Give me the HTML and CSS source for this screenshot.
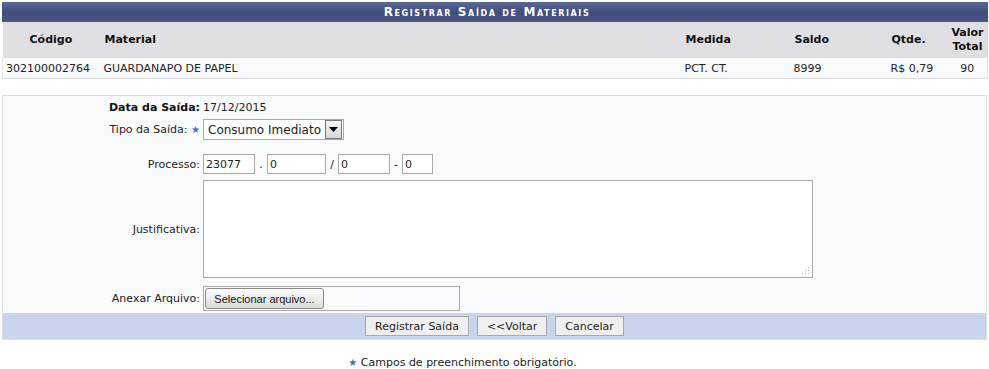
FILE: index.html
```html
<!DOCTYPE html>
<html>
<head>
    <meta charset="UTF-8">
    <title>Registrar Saída de Materiais</title>
    <link rel="stylesheet" href="styles.css">
</head>
<body>
    <table class="listing">
        <caption>Registrar Saída de Materiais</caption>
        <colgroup>
            <col class="w-cod"><col class="w-mat"><col class="w-med"><col class="w-sal"><col class="w-qtd"><col class="w-val">
        </colgroup>
        <thead>
            <tr>
                <th class="th-cod">Código</th>
                <th>Material</th>
                <th>Medida</th>
                <th>Saldo</th>
                <th>Qtde.</th>
                <th class="center">Valor Total</th>
            </tr>
        </thead>
        <tbody>
            <tr>
                <td>302100002764</td>
                <td>GUARDANAPO DE PAPEL</td>
                <td>PCT. CT.</td>
                <td>8999</td>
                <td>R$ 0,79</td>
                <td class="center">90</td>
            </tr>
        </tbody>
    </table>

    <div class="form-box">
        <div class="form-row row-data">
            <span class="label bold">Data da Saída:</span>
            <span class="value">17/12/2015</span>
        </div>
        <div class="form-row row-tipo">
            <span class="label">Tipo da Saída: <span class="req">★</span></span>
            <div class="select">
                <span class="select-text">Consumo Imediato</span>
                <span class="select-btn">
                    <svg width="9" height="5" viewBox="0 0 9 5"><path d="M0 0H9L4.5 5Z" fill="#000"/></svg>
                </span>
            </div>
        </div>
        <div class="form-row row-proc">
            <span class="label">Processo:</span>
            <div class="proc">
                <input type="text" class="in-a" value="23077">
                <span class="sep">.</span>
                <input type="text" class="in-b" value="0">
                <span class="sep">/</span>
                <input type="text" class="in-c" value="0">
                <span class="sep">-</span>
                <input type="text" class="in-d" value="0">
            </div>
        </div>
        <div class="form-row row-just">
            <span class="label">Justificativa:</span>
            <div class="area-wrap">
                <textarea></textarea>
                <svg class="grip" width="8" height="8" viewBox="0 0 8 8">
                    <g fill="#b0b0b0">
                        <rect x="6" y="0" width="1" height="1"/>
                        <rect x="6" y="3" width="1" height="1"/><rect x="3" y="3" width="1" height="1"/>
                        <rect x="6" y="6" width="1" height="1"/><rect x="3" y="6" width="1" height="1"/><rect x="0" y="6" width="1" height="1"/>
                    </g>
                </svg>
            </div>
        </div>
        <div class="form-row row-file">
            <span class="label">Anexar Arquivo:</span>
            <div class="file-box">
                <button class="file-btn">Selecionar arquivo...</button>
            </div>
        </div>
        <div class="form-footer">
            <button class="btn">Registrar Saída</button>
            <button class="btn">&lt;&lt;Voltar</button>
            <button class="btn">Cancelar</button>
        </div>
    </div>

    <p class="note"><span class="req">★</span> Campos de preenchimento obrigatório.</p>
</body>
</html>
```

FILE: styles.css
```css
body {
    margin: 0;
    padding: 2px 2px 0 2px;
    background: #fff;
    font-family: Verdana, "DejaVu Sans", sans-serif;
    font-size: 11px;
    color: #222;
}

.listing {
    width: 985px;
    border-collapse: collapse;
    table-layout: fixed;
}

.listing caption {
    height: 20px;
    line-height: 20px;
    background: linear-gradient(#5a6898, #3f4c7c 55%, #4a5887);
    color: #fff;
    font-weight: bold;
    font-variant: small-caps;
    letter-spacing: 1.6px;
    font-size: 12px;
    padding-right: 16px;
    overflow: hidden;
}

.w-cod { width: 98px; }
.w-mat { width: 581px; }
.w-med { width: 109px; }
.w-sal { width: 97px; }
.w-qtd { width: 60px; }
.w-val { width: 40px; }

.listing th {
    height: 36px;
    padding: 0 4px;
    background: #dfdfe3;
    text-align: left;
    font-weight: bold;
    color: #111;
    line-height: 14px;
}

.listing th.th-cod {
    padding-left: 27px;
}

.listing th.center,
.listing td.center {
    text-align: center;
    padding-left: 0;
    padding-right: 0;
}

.listing td {
    height: 20px;
    padding: 0 4px 0 3px;
    background: #f9fafc;
    border-bottom: 1px solid #dcdcdc;
    white-space: nowrap;
}

.listing tbody tr td:first-child {
    border-left: 1px solid #e4e4e4;
}

.listing tbody tr td:last-child {
    border-right: 1px solid #e4e4e4;
}

.form-box {
    margin-top: 16px;
    padding-top: 2px;
    width: 983px;
    border: 1px solid #dedede;
    background: #f9fafc;
}

.form-row {
    display: flex;
    align-items: center;
}

.label {
    width: 197px;
    flex: none;
    text-align: right;
    padding-right: 3px;
}

.bold {
    font-weight: bold;
    color: #111;
}

.req {
    color: #4a6fc0;
    font-size: 10px;
}

.row-data {
    height: 18px;
}

.row-tipo {
    margin-top: 3px;
    height: 21px;
}

.select {
    display: flex;
    align-items: center;
    width: 134px;
    height: 19px;
    border: 1px solid #a8a8a8;
    background: #fff;
    padding: 0 1px 0 4px;
}

.select-text {
    flex: 1;
    font-size: 12px;
    white-space: nowrap;
}

.select-btn {
    display: flex;
    align-items: center;
    justify-content: center;
    width: 15px;
    height: 17px;
    border: 1px solid #777;
    background: linear-gradient(#f4f4f4, #d8d8d8);
}

.row-proc {
    margin-top: 14px;
    height: 20px;
}

.proc {
    display: flex;
    align-items: center;
}

.proc input {
    height: 20px;
    box-sizing: border-box;
    border: 1px solid #a8a8a8;
    padding: 0 2px;
    font-family: Verdana, "DejaVu Sans", sans-serif;
    font-size: 11px;
    color: #222;
}

.in-a { width: 52px; }
.in-b { width: 59px; }
.in-c { width: 52px; }
.in-d { width: 31px; }

.sep {
    width: 12px;
    text-align: center;
}

.row-just {
    margin-top: 6px;
}

.area-wrap {
    position: relative;
    width: 610px;
    height: 98px;
}

.area-wrap textarea {
    width: 100%;
    height: 100%;
    box-sizing: border-box;
    border: 1px solid #a8a8a8;
    resize: none;
    margin: 0;
    display: block;
}

.grip {
    position: absolute;
    right: 3px;
    bottom: 3px;
}

.row-file {
    margin-top: 8px;
    height: 25px;
}

.file-box {
    width: 254px;
    height: 23px;
    border: 1px solid #a8a8a8;
    background: #fafbfd;
    display: flex;
    align-items: center;
    padding-left: 1px;
}

.file-btn {
    width: 119px;
    height: 21px;
    border: 1px solid #8a8a8a;
    border-radius: 3px;
    background: linear-gradient(#fbfbfb, #ececec 50%, #dcdcdc);
    font-family: Tahoma, "Liberation Sans", sans-serif;
    font-size: 11px;
    color: #111;
    padding: 0;
}

.form-footer {
    margin-top: 2px;
    height: 26px;
    background: #c9d5ec;
    display: flex;
    justify-content: center;
    align-items: center;
    gap: 8px;
}

.btn {
    height: 20px;
    padding: 0 9px;
    border: 1px solid #a8a8a8;
    background: #efefef;
    font-family: Verdana, "DejaVu Sans", sans-serif;
    font-size: 11px;
    color: #222;
}

.note {
    margin: 16px 0 0 0;
    text-align: center;
    padding-right: 64px;
    font-size: 11px;
}
```
